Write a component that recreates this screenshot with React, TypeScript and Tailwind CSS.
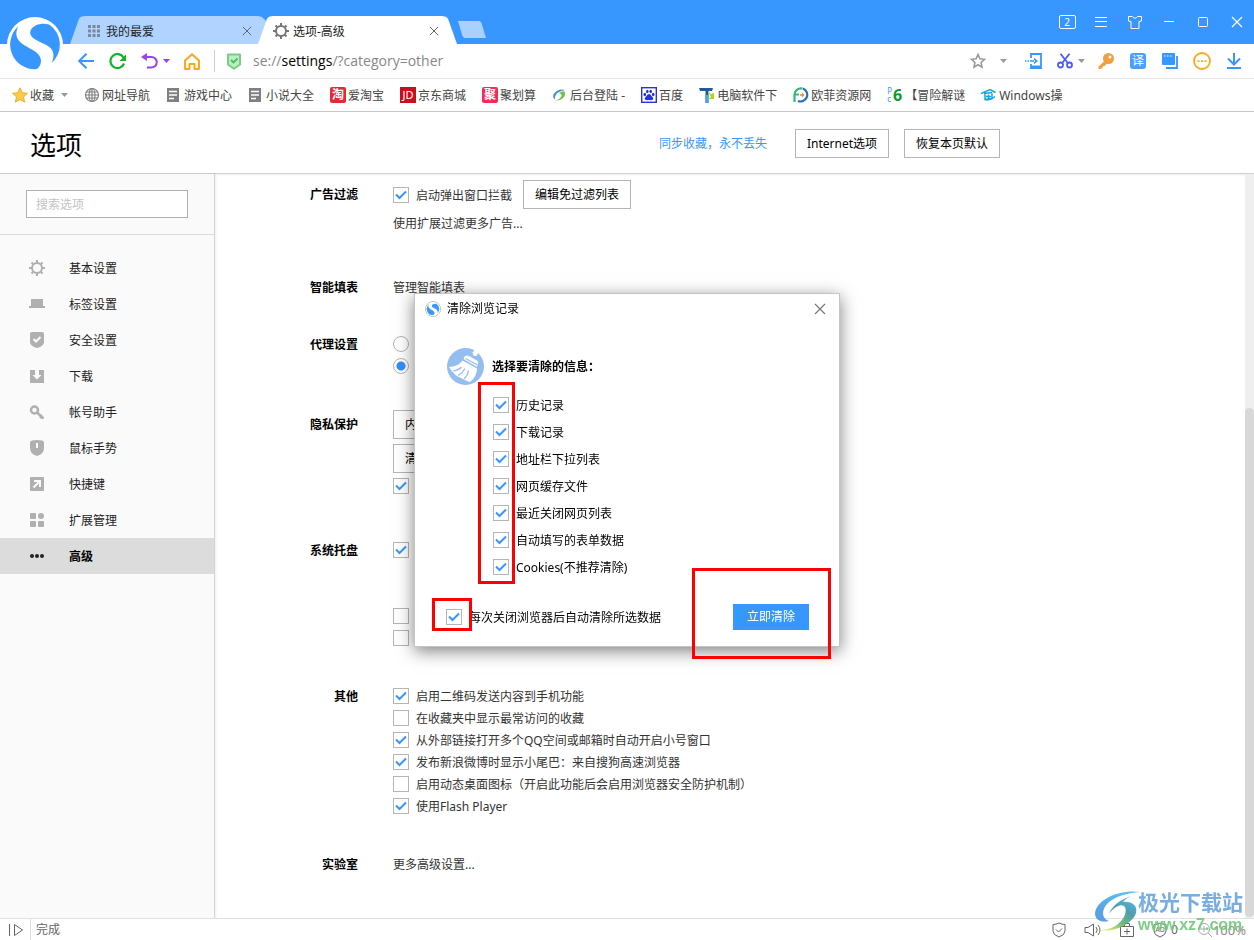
import * as React from "react"

const navItems = [
  { id: "basic", label: "基本设置" },
  { id: "tabs", label: "标签设置" },
  { id: "safe", label: "安全设置" },
  { id: "download", label: "下载" },
  { id: "account", label: "帐号助手" },
  { id: "mouse", label: "鼠标手势" },
  { id: "shortcut", label: "快捷键" },
  { id: "extension", label: "扩展管理" },
  { id: "advanced", label: "高级" },
]

const otherOptions = [
  { label: "启用二维码发送内容到手机功能", checked: true },
  { label: "在收藏夹中显示最常访问的收藏", checked: false },
  { label: "从外部链接打开多个QQ空间或邮箱时自动开启小号窗口", checked: true },
  { label: "发布新浪微博时显示小尾巴：来自搜狗高速浏览器", checked: true },
  { label: "启用动态桌面图标（开启此功能后会启用浏览器安全防护机制）", checked: false },
  { label: "使用Flash Player", checked: true },
]

const clearOptions = [
  "历史记录",
  "下载记录",
  "地址栏下拉列表",
  "网页缓存文件",
  "最近关闭网页列表",
  "自动填写的表单数据",
  "Cookies(不推荐清除)",
]

function Logo({ className, color = "#3897ff" }: { className?: string; color?: string }) {
  return (
    <svg viewBox="0 0 168 168" className={className} aria-hidden="true">
      <circle cx="84" cy="84" r="84" fill="#fff" />
      <path d="M34 28A74 74 0 0 0 84 157Q92 157 96 150C108 132 102 112 76 98C48 82 14 68 34 28Z" fill={color} />
      <path d="M128 23A74 74 0 0 1 134 138C146 108 138 92 110 80C84 68 62 58 72 38C80 22 108 16 128 23Z" fill={color} />
    </svg>
  )
}

function Caret({ color = "#999" }: { color?: string }) {
  return (
    <svg viewBox="0 0 7 4" className="h-1 w-[7px] shrink-0" aria-hidden="true">
      <path d="M0 0h7L3.500 4z" fill={color} />
    </svg>
  )
}

function CloseIcon({ className, stroke = "#666" }: { className?: string; stroke?: string }) {
  return (
    <svg viewBox="0 0 12 12" className={className} fill="none" stroke={stroke} strokeWidth="1.200" aria-hidden="true">
      <path d="M1 1l10 10M11 1L1 11" />
    </svg>
  )
}

function Checkbox({ label, hidden, checked = true }: { label: string; hidden?: boolean; checked?: boolean }) {
  return (
    <label className="flex h-[22px] items-center gap-[7px]">
      <span className="grid size-4 shrink-0">
        <input
          type="checkbox"
          defaultChecked={checked}
          aria-label={hidden ? label : undefined}
          className="peer size-4 appearance-none border border-[#b5b5b5] bg-white [grid-area:1/1]"
        />
        <svg
          viewBox="0 0 16 16"
          className="pointer-events-none invisible size-4 [grid-area:1/1] peer-checked:visible"
          fill="none"
          stroke="#3897ff"
          strokeWidth="2"
          aria-hidden="true"
        >
          <path d="M3 7.500l3.500 3.500L13 4.500" />
        </svg>
      </span>
      {!hidden && <span className="pt-[2px]">{label}</span>}
    </label>
  )
}

function Radio({ label, checked }: { label: string; checked?: boolean }) {
  return (
    <div className="flex h-[22px] items-center">
      <input
        type="radio"
        name="proxy"
        defaultChecked={checked}
        aria-label={label}
        className="size-4 appearance-none rounded-full border border-[#b5b5b5] bg-white checked:bg-[radial-gradient(circle,#2f8fff_4px,#fff_5px)]"
      />
    </div>
  )
}

function OutlineButton({ children }: { children: React.ReactNode }) {
  return (
    <button type="button" className="h-[29px] border border-[#b5b5b5] bg-white px-[11px] text-black">
      {children}
    </button>
  )
}

function Section({ title, className, children }: { title: string; className?: string; children: React.ReactNode }) {
  return (
    <section className={`flex gap-[35px] ${className ?? ""}`}>
      <h2 className="w-[143px] shrink-0 pt-px text-right font-bold leading-[22px] text-black">{title}</h2>
      <div>{children}</div>
    </section>
  )
}

function NavIcon({ id }: { id: string }) {
  const icons: Record<string, React.ReactNode> = {
    basic: (
      <g fill="none" stroke="#b0b0b0" strokeWidth="2">
        <circle cx="8" cy="8" r="5" />
        <path d="M8 0v3M8 13v3M0 8h3M13 8h3M2.500 2.500l2 2M11.500 11.500l2 2M13.500 2.500l-2 2M4.500 11.500l-2 2" />
      </g>
    ),
    tabs: <path d="M2 3h12v7h2v2H0v-2h2z" fill="#b0b0b0" />,
    safe: (
      <>
        <path d="M1 2Q1 0 3 0h10q2 0 2 2v8q0 4-7 6-7-2-7-6z" fill="#b0b0b0" />
        <path d="M4.500 7l2.500 2.500L11.500 5" fill="none" stroke="#fafafa" strokeWidth="2" />
      </>
    ),
    download: <path d="M1 2h5v5H3.500L8 11.500 12.500 7H10V2h5v13H1z" fill="#b0b0b0" />,
    account: (
      <g fill="none" stroke="#b0b0b0" strokeWidth="2.500">
        <circle cx="5.500" cy="6" r="3.500" />
        <path d="M8 8.500l6.500 6M11 14l2.500-2.500" />
      </g>
    ),
    mouse: (
      <>
        <path d="M1 2.500Q1 1 3 .5q5-1 10 0 2 .5 2 2V8q0 6-7 8-7-2-7-8z" fill="#b0b0b0" />
        <path d="M8 3v5" stroke="#fafafa" strokeWidth="2" />
      </>
    ),
    shortcut: (
      <>
        <rect x="1" y="1" width="14" height="14" rx="1" fill="#b0b0b0" />
        <path d="M5 5h6v6M11 5l-6.500 6.500" fill="none" stroke="#fafafa" strokeWidth="2" />
      </>
    ),
    extension: (
      <g fill="#b0b0b0">
        <rect x="1" y="1" width="6" height="6" rx="1" />
        <circle cx="12" cy="4" r="3" />
        <rect x="1" y="9" width="6" height="6" rx="1" />
        <rect x="9" y="9" width="6" height="6" rx="1" />
      </g>
    ),
    advanced: (
      <g fill="#222">
        <circle cx="3" cy="8" r="2" />
        <circle cx="8" cy="8" r="2" />
        <circle cx="13" cy="8" r="2" />
      </g>
    ),
  }
  return (
    <svg viewBox="0 0 16 16" className="size-4 shrink-0" aria-hidden="true">
      {icons[id]}
    </svg>
  )
}

function TabBar() {
  return (
    <div className="flex h-11 items-end bg-[#3897ff] pl-[70px]">
      <div className="flex h-7 w-[196px] shrink-0 items-center bg-[#b0d3ff] pl-[18px] pr-[14px] [clip-path:polygon(0_100%,9px_10%,11px_3%,15px_0,188px_0,192px_4%,196px_18%,196px_100%)]">
        <svg viewBox="0 0 12 12" className="mt-[2px] size-3" fill="#7d8795" aria-hidden="true">
          {[0, 4.5, 9].map((x) => [0, 4.5, 9].map((y) => <rect key={`${x}-${y}`} x={x} y={y} width="3" height="3" />))}
        </svg>
        <span className="ml-[6px] mt-1 flex-1 text-[#222]">我的最爱</span>
        <button type="button" aria-label="关闭标签">
          <CloseIcon className="mt-[2px] size-[10px]" />
        </button>
      </div>
      <div className="-ml-[8px] flex h-7 w-[199px] shrink-0 items-center bg-white pl-[15px] pr-[18px] [clip-path:polygon(0_100%,9px_10%,11px_3%,15px_0,184px_0,188px_3%,190px_10%,199px_100%)]">
        <svg viewBox="0 0 16 16" className="mt-[2px] size-4" fill="none" stroke="#777" strokeWidth="2" aria-hidden="true">
          <circle cx="8" cy="8" r="5" />
          <path d="M8 0v3M8 13v3M0 8h3M13 8h3M2.500 2.500l2 2M11.500 11.500l2 2M13.500 2.500l-2 2M4.500 11.500l-2 2" />
        </svg>
        <span className="ml-[4px] mt-1 flex-1 text-[#222]">选项-高级</span>
        <button type="button" aria-label="关闭标签">
          <CloseIcon className="mt-[2px] size-[10px]" />
        </button>
      </div>
      <button
        type="button"
        aria-label="新建标签"
        className="mb-[6px] ml-px h-[17px] w-7 bg-[#a9d1ff] [clip-path:polygon(0_0,78%_0,84%_12%,100%_100%,22%_100%,16%_88%)]"
      />
      <div className="ml-auto flex self-start pt-[10px]">
        <button type="button" className="flex h-6 w-[34px] items-center justify-center">
          <span className="h-[14px] w-[17px] rounded-[2px] border border-white text-center text-[10px] leading-[12px] text-white">2</span>
        </button>
        <button type="button" aria-label="菜单" className="flex h-6 w-[34px] items-center justify-center">
          <svg viewBox="0 0 12 10" className="h-[10px] w-3" stroke="#fff" aria-hidden="true">
            <path d="M0 .5h12M0 4.500h12M0 9.500h12" />
          </svg>
        </button>
        <button type="button" aria-label="皮肤" className="flex h-6 w-[34px] items-center justify-center">
          <svg viewBox="0 0 14 13" className="h-[13px] w-[14px]" fill="none" stroke="#fff" aria-hidden="true">
            <path d="M4.500.5Q7 4 9.500.5h4v4.500l-2.500.5v7H3v-7L.5 5V.5z" />
          </svg>
        </button>
        <button type="button" aria-label="最小化" className="flex h-6 w-[34px] items-center justify-center">
          <svg viewBox="0 0 10 10" className="size-[10px]" stroke="#fff" aria-hidden="true">
            <path d="M0 4.500h10" />
          </svg>
        </button>
        <button type="button" aria-label="最大化" className="flex h-6 w-[34px] items-center justify-center">
          <svg viewBox="0 0 10 10" className="size-[10px]" fill="none" stroke="#fff" aria-hidden="true">
            <rect x=".5" y=".5" width="9" height="9" rx="1" />
          </svg>
        </button>
        <button type="button" aria-label="关闭" className="flex h-6 w-[34px] items-center justify-center">
          <CloseIcon className="size-3" stroke="#fff" />
        </button>
      </div>
    </div>
  )
}

function Toolbar() {
  return (
    <div className="flex h-[35px] items-center border-b border-[#e5e5e5] bg-white pl-[70px] pr-1">
      <button type="button" aria-label="后退" className="flex w-8 justify-center">
        <svg viewBox="0 0 16 16" className="size-4" fill="none" stroke="#3897ff" strokeWidth="2" aria-hidden="true">
          <path d="M16 8H1M8.500.7L1.200 8l7.300 7.300" />
        </svg>
      </button>
      <button type="button" aria-label="刷新" className="flex w-8 justify-center">
        <svg viewBox="0 0 18 16" className="h-4 w-[18px]" aria-hidden="true">
          <path d="M14.500 4.500A7 7 0 1 0 15 10.500" fill="none" stroke="#12b52a" strokeWidth="2.200" />
          <path d="M17 1.500V8h-6.500z" fill="#12b52a" />
        </svg>
      </button>
      <div className="flex w-[42px] items-center pl-[7px]">
        <button type="button" aria-label="撤销">
          <svg viewBox="0 0 17 16" className="h-4 w-[17px]" aria-hidden="true">
            <path d="M3 4h7.500a5 5 0 0 1 0 10.500H6" fill="none" stroke="#9b3ff2" strokeWidth="2" />
            <path d="M0 4L6 0v8z" fill="#9b3ff2" />
          </svg>
        </button>
        <span className="ml-[5px] flex">
          <Caret color="#9b3ff2" />
        </span>
      </div>
      <button type="button" aria-label="主页" className="flex w-8 justify-center">
        <svg viewBox="0 0 16 17" className="h-[17px] w-4" fill="none" stroke="#ffa81f" strokeWidth="2" aria-hidden="true">
          <path d="M1 7.500L8 1.300l7 6.200V16h-4.500v-5h-5v5H1z" strokeLinejoin="round" />
        </svg>
      </button>
      <span className="ml-[6px] h-[22px] w-px bg-[#d0d0d0]" />
      <svg viewBox="0 0 16 17" className="ml-[11px] h-[17px] w-4" fill="none" aria-hidden="true">
        <path d="M2 1.500h12v10L8 15.800 2 11.500z" fill="#b5f2bd" stroke="#7ccb87" strokeWidth="2" strokeLinejoin="round" />
        <path d="M5 7l2.500 2.500L11.500 5.500" stroke="#55b564" strokeWidth="1.800" />
      </svg>
      <div
        role="textbox"
        aria-label="地址栏"
        contentEditable
        suppressContentEditableWarning
        className="ml-[11px] flex-1 font-['Open_Sans','Noto_Sans_CJK_SC',sans-serif] text-[14px] leading-5 text-[#888] outline-none"
      >
        se://<span className="text-black">settings</span>/?category=other
      </div>
      <button type="button" aria-label="收藏" className="flex w-[30px] justify-center">
        <svg viewBox="0 0 16 16" className="size-4" fill="none" stroke="#999" strokeWidth="1.600" aria-hidden="true">
          <path d="M8 1.500l1.900 4.300 4.600.5-3.400 3.200.9 4.700L8 11.800l-4 2.400.9-4.700L1.500 6.300l4.600-.5z" />
        </svg>
      </button>
      <span className="mr-1 flex w-5 justify-center">
        <Caret />
      </span>
      <button type="button" aria-label="登录" className="flex w-8 justify-center">
        <svg viewBox="0 0 17 16" className="h-4 w-[17px]" aria-hidden="true">
          <path d="M6 5V1h10v14H6v-4" fill="none" stroke="#3897ff" strokeWidth="1.800" />
          <path d="M6 12.500h10V16H6zM8 7.200h-3v1.600h5v-1.600zM9 4.800L13 8l-4 3.200zM0 7.200h1.500v1.600H0zM2.500 7.200H4v1.600H2.500z" fill="#3897ff" />
        </svg>
      </button>
      <div className="flex w-[41px] items-center gap-[5px] pl-2">
        <button type="button" aria-label="截图">
          <svg viewBox="0 0 16 16" className="size-4" fill="none" stroke="#4a5cf0" strokeWidth="1.800" aria-hidden="true">
            <circle cx="3.500" cy="12" r="2.500" />
            <circle cx="12.500" cy="12" r="2.500" />
            <path d="M3.500.8l7.500 9.400M12.500.8L5 10.200" />
          </svg>
        </button>
        <Caret />
      </div>
      <button type="button" aria-label="密码" className="flex w-8 justify-center">
        <svg viewBox="0 0 16 16" className="size-4" aria-hidden="true">
          <path d="M7 7.500L.5 13.500V16h3v-1.500H5V13h1.500l3-3z" fill="#f0a040" />
          <circle cx="10.500" cy="5.500" r="5.500" fill="#f0a040" />
          <circle cx="12" cy="4" r="1.500" fill="#fff" />
        </svg>
      </button>
      <button type="button" className="flex w-8 justify-center">
        <span className="size-4 rounded-[3px] bg-[#4aa0ff] text-center text-[12px] leading-4 text-white">译</span>
      </button>
      <button type="button" aria-label="多窗口" className="flex w-8 justify-center">
        <svg viewBox="0 0 16 16" className="size-4" aria-hidden="true">
          <path d="M1 0h11q1 0 1 1v10q0 1-1 1H1q-1 0-1-1V1q0-1 1-1z" fill="#3897ff" />
          <path d="M15 3v12H4" fill="none" stroke="#3897ff" strokeWidth="1.800" />
          <path d="M2 3h1.500M5 3h1.500M8 3h1.500" stroke="#fff" strokeWidth="1.200" />
        </svg>
      </button>
      <button type="button" aria-label="更多" className="flex w-8 justify-center">
        <svg viewBox="0 0 18 18" className="size-[18px]" aria-hidden="true">
          <circle cx="9" cy="9" r="8" fill="none" stroke="#ffa81f" strokeWidth="1.800" />
          <path d="M4.500 8.200h2v1.800h-2zM8 8.200h2v1.800H8zM11.500 8.200h2v1.800h-2z" fill="#ffa81f" />
        </svg>
      </button>
      <button type="button" aria-label="下载" className="flex w-8 justify-center">
        <svg viewBox="0 0 14 16" className="h-4 w-[14px]" fill="none" stroke="#3897ff" strokeWidth="2" aria-hidden="true">
          <path d="M7 0v11M1 5.500l6 6 6-6M0 15h14" />
        </svg>
      </button>
    </div>
  )
}

function Bookmark({ icon, children }: { icon: React.ReactNode; children: React.ReactNode }) {
  return (
    <a href="#" className="flex shrink-0 items-center gap-[2px]">
      {icon}
      <span className="pt-[2px]">{children}</span>
    </a>
  )
}

function DocIcon() {
  return (
    <svg viewBox="0 0 16 16" className="size-4" aria-hidden="true">
      <path d="M1 1h12v14H1z" fill="#808080" />
      <path d="M3 4.500h8M3 8h8M3 11.500h5" stroke="#fff" strokeWidth="1.500" />
    </svg>
  )
}

function BookmarkBar() {
  return (
    <nav aria-label="收藏栏" className="flex h-[33px] items-center gap-4 overflow-hidden border-b border-[#c8c8c8] bg-white pl-3 text-[#444]">
      <button type="button" className="flex shrink-0 items-center gap-[2px]">
        <svg viewBox="0 0 16 16" className="size-4" aria-hidden="true">
          <path d="M8 .8l2.200 4.900 5.200.6-3.900 3.600 1.100 5.300L8 12.600l-4.600 2.600 1.100-5.300L.6 6.300l5.200-.6z" fill="#fccb45" stroke="#e9ae35" />
        </svg>
        <span className="pt-[2px]">收藏</span>
        <span className="ml-[5px] flex">
          <Caret />
        </span>
      </button>
      <Bookmark
        icon={
          <svg viewBox="0 0 16 16" className="size-4" fill="none" stroke="#808080" strokeWidth="1.200" aria-hidden="true">
            <circle cx="8" cy="8" r="6.500" />
            <ellipse cx="8" cy="8" rx="3" ry="6.500" />
            <path d="M8 1.500v13M1.500 8h13M2.500 5h11M2.500 11h11" />
          </svg>
        }
      >
        网址导航
      </Bookmark>
      <Bookmark icon={<DocIcon />}>游戏中心</Bookmark>
      <Bookmark icon={<DocIcon />}>小说大全</Bookmark>
      <Bookmark icon={<span className="size-4 rounded-[2px] bg-[#e02c34] text-center text-[12px] font-bold leading-4 text-white">淘</span>}>
        爱淘宝
      </Bookmark>
      <Bookmark icon={<span className="size-4 bg-[#c8101e] text-center text-[11px] leading-4 text-white">JD</span>}>
        京东商城
      </Bookmark>
      <Bookmark icon={<span className="size-4 rounded-[2px] bg-[#f5295a] text-center text-[12px] font-bold leading-4 text-white">聚</span>}>
        聚划算
      </Bookmark>
      <Bookmark
        icon={
          <svg viewBox="0 0 16 16" className="size-4" aria-hidden="true">
            <path d="M13 3Q7 1 2.500 6-.5 10 3 12.500 2.500 8 6 5.500 9 3.500 13 3z" fill="#3f8fd6" />
            <path d="M7 6q4-2.500 5.500-1.500Q14 8 11 11q-3 3-7.500 2.500Q8 12.500 9.500 9q.5-2-2.500-3z" fill="#6fc04a" />
          </svg>
        }
      >
        后台登陆 -
      </Bookmark>
      <Bookmark
        icon={
          <svg viewBox="0 0 16 16" className="size-4" aria-hidden="true">
            <rect x=".7" y=".7" width="14.600" height="14.600" fill="#fff" stroke="#2932e1" strokeWidth="1.400" />
            <g fill="#2932e1">
              <ellipse cx="3.800" cy="7.500" rx="1.300" ry="1.700" />
              <ellipse cx="6.300" cy="4.500" rx="1.300" ry="1.700" />
              <ellipse cx="9.700" cy="4.500" rx="1.300" ry="1.700" />
              <ellipse cx="12.200" cy="7.500" rx="1.300" ry="1.700" />
              <path d="M8 7q1.500 0 2.500 2 2.500 2 1.500 3.500-1 1-4 .5-3 .5-4-.5Q3 11 5.500 9 6.500 7 8 7z" />
            </g>
          </svg>
        }
      >
        百度
      </Bookmark>
      <Bookmark
        icon={
          <svg viewBox="0 0 16 16" className="size-4" aria-hidden="true">
            <path d="M0 1h14l-1 3H9.500v12h-3V4H1z" fill="#235a9c" />
            <path d="M6.500 8h3v8h-3z" fill="#49a8e0" />
            <path d="M9 4l3 3 3-1v6H9l3-2z" fill="#a6d81e" />
          </svg>
        }
      >
        电脑软件下
      </Bookmark>
      <Bookmark
        icon={
          <svg viewBox="0 0 16 16" className="size-4" fill="none" aria-hidden="true">
            <path d="M1.500 15V7.500a6.500 6.500 0 0 1 8-6M1.500 7.500H6" stroke="#35b978" strokeWidth="2.200" />
            <path d="M10 1.500a6.600 6.600 0 1 1-5 12.500" stroke="#2a6fb8" strokeWidth="2.200" />
            <path d="M7 7.200h2V5.500L11.500 8 9 10.500V8.800H7z" fill="#f5853a" />
          </svg>
        }
      >
        欧菲资源网
      </Bookmark>
      <Bookmark
        icon={
          <span className="flex size-4 items-center">
            <span className="flex flex-col text-[8px] leading-[8px] text-[#3f9bea]">
              <span>P</span>
              <span>c</span>
            </span>
            <span className="ml-px text-[16px] font-bold leading-4 text-[#11992e]">6</span>
          </span>
        }
      >
        【冒险解谜
      </Bookmark>
      <Bookmark
        icon={
          <svg viewBox="0 0 16 16" className="size-4" fill="none" stroke="#14a5e0" strokeWidth="1.500" aria-hidden="true">
            <path d="M0 6.500l9-4 5.500 3M3 6.500l8-1M4 7v5.500l7-1V6.500M5 9.500h5M7.500 7.500v4" />
            <path d="M4.500 13Q10 13 14 9.500" />
          </svg>
        }
      >
        Windows操
      </Bookmark>
    </nav>
  )
}

function Sidebar() {
  return (
    <aside className="w-[215px] shrink-0 border-r border-[#d5d5d5] bg-[#fafafa] shadow-[1px_0_2px_#00000012]">
      <div className="border-b border-[#dcdcdc] px-[26px] py-4">
        <input
          type="search"
          aria-label="搜索选项"
          placeholder="搜索选项"
          className="h-7 w-full appearance-none border border-[#b0b0b0] bg-white px-[9px] outline-none placeholder:text-[#c4c4c4]"
        />
      </div>
      <nav aria-label="选项分类" className="mt-[15px]">
        {navItems.map((item) => (
          <a
            key={item.id}
            href="#"
            className={
              item.id === "advanced"
                ? "flex h-9 items-center gap-6 bg-[#dcdcdc] pl-[29px] font-bold text-black"
                : "flex h-9 items-center gap-6 pl-[29px] text-[#222]"
            }
          >
            <NavIcon id={item.id} />
            <span className="pt-px">{item.label}</span>
          </a>
        ))}
      </nav>
    </aside>
  )
}

function Settings() {
  return (
    <main className="min-w-0 flex-1 pt-[6px]">
      <Section title="广告过滤" className="[&>h2]:pt-1">
        <div className="flex h-[29px] items-center gap-[11px]">
          <Checkbox label="启动弹出窗口拦截" />
          <OutlineButton>编辑免过滤列表</OutlineButton>
        </div>
        <a href="#" className="mt-1 block leading-[22px]">使用扩展过滤更多广告...</a>
      </Section>
      <Section title="智能填表" className="mt-[41px]">
        <a href="#" className="block pt-px leading-[22px]">管理智能填表</a>
      </Section>
      <Section title="代理设置" className="mt-[34px]">
        <Radio label="不使用代理" />
        <Radio label="使用IE代理设置" checked />
      </Section>
      <Section title="隐私保护" className="mt-[33px] [&>h2]:pt-1">
        <div className="flex flex-col items-start gap-[5px]">
          <OutlineButton>内容设置</OutlineButton>
          <OutlineButton>清除浏览记录</OutlineButton>
        </div>
        <div className="mt-[2px]">
          <Checkbox label="隐私保护" hidden />
        </div>
      </Section>
      <Section title="系统托盘" className="mt-[42px]">
        <Checkbox label="系统托盘" hidden />
        <div className="mt-[44px]">
          <Checkbox label="托盘提示" hidden checked={false} />
          <Checkbox label="托盘图标" hidden checked={false} />
        </div>
      </Section>
      <Section title="其他" className="mt-[36px]">
        {otherOptions.map((o) => (
          <Checkbox key={o.label} label={o.label} checked={o.checked} />
        ))}
      </Section>
      <Section title="实验室" className="mt-[36px]">
        <a href="#" className="block pt-px leading-[22px]">更多高级设置...</a>
      </Section>
    </main>
  )
}

function ClearDialog() {
  return (
    <div className="pointer-events-none fixed inset-0 flex items-center justify-center">
      <div
        role="dialog"
        aria-labelledby="clear-title"
        className="pointer-events-auto relative w-[426px] border border-[#c4c4c4] bg-white pb-4 text-black shadow-[0_4px_16px_#00000080]"
      >
        <div className="flex h-[30px] items-center pl-[10px] pr-[13px]">
          <span className="flex size-4 items-center justify-center rounded-full border border-[#bbb] bg-white">
            <Logo className="size-[14px]" />
          </span>
          <h2 id="clear-title" className="ml-[6px] flex-1">清除浏览记录</h2>
          <button type="button" aria-label="关闭">
            <CloseIcon className="size-3" stroke="#777" />
          </button>
        </div>
        <div className="mt-6 flex items-center gap-2 pl-8">
          <svg viewBox="0 0 37 37" className="size-[37px]" aria-hidden="true">
            <circle cx="18.500" cy="18.500" r="18.500" fill="#94bdf0" />
            <path d="M25.500 4.500l3-3.500 3 2-1 3.500q-1 2-3 1.500-2-1-2-3.500z" fill="#fff" />
            <path d="M18 8q2-1 4 0l8 4.500q2 1 1 3l-1 3.500L16.500 11z" fill="#fff" />
            <path d="M15.500 12.500L30 20.500q0 8-7 13.500-4-1-7-3Q7 28 2 19q9 0 13.500-6.500z" fill="#fff" />
            <path d="M18.500 10.500l12 6.500M6 23q6-1 8.500-4M11 27.500q5-3 7-7M17 31q4-4 4.500-8.500" stroke="#94bdf0" strokeWidth="1.200" fill="none" />
          </svg>
          <p className="pt-px font-bold">选择要清除的信息：</p>
        </div>
        <div className="mt-[9px] flex flex-col gap-[5px] pl-[78px]">
          {clearOptions.map((label) => (
            <Checkbox key={label} label={label} />
          ))}
        </div>
        <div className="mt-[26px] flex items-center justify-between pl-[31px] pr-[30px]">
          <Checkbox label="每次关闭浏览器后自动清除所选数据" />
          <button type="button" className="h-[26px] w-[76px] bg-[#3897ff] text-white">立即清除</button>
        </div>
        <div className="pointer-events-none absolute left-[63px] top-[88px] h-[202px] w-[37px] border-3 border-[#ff0000]" />
        <div className="pointer-events-none absolute left-[17px] top-[304px] h-[33px] w-10 border-3 border-[#ff0000]" />
        <div className="pointer-events-none absolute left-[277px] top-[274px] h-[91px] w-[139px] border-3 border-[#ff0000]" />
      </div>
    </div>
  )
}

function StatusBar() {
  return (
    <footer className="flex h-[22px] items-center border-t border-[#e2e2e2] bg-white pl-2 pr-2 text-[#666]">
      <button type="button" aria-label="侧边栏">
        <svg viewBox="0 0 16 14" className="h-[14px] w-4" fill="none" stroke="#666" aria-hidden="true">
          <path d="M1.500 1v12M6.500 1.500v11L14.500 7z" />
        </svg>
      </button>
      <span className="ml-[6px] h-full w-px bg-[#ddd]" />
      <span className="ml-[5px] flex-1">完成</span>
      <div className="flex items-center">
        <svg viewBox="0 0 16 16" className="mr-[17px] size-4" fill="none" stroke="#666" aria-hidden="true">
          <path d="M8 1q3 1.500 6 1.500V9q0 4-6 6-6-2-6-6V2.500Q5 2.500 8 1zM5 7.500l2.500 2.500L11 6.500" />
        </svg>
        <svg viewBox="0 0 17 16" className="mr-[19px] h-4 w-[17px]" fill="none" stroke="#666" aria-hidden="true">
          <path d="M1 5.500h3L9.500 2v12L4 10.500H1zM12 5q2.500 3 0 6M14 3q4 5 0 10" />
        </svg>
        <svg viewBox="0 0 14 14" className="mr-[19px] size-[14px]" fill="none" stroke="#666" aria-hidden="true">
          <path d="M.5 3.500h13v10H.5zM4.500 3.500v-3h5v3M4 8.500h6M7 5.500v6" />
        </svg>
        <span className="flex items-center gap-[4px]">
          <svg viewBox="0 0 14 16" className="h-4 w-[14px]" fill="none" stroke="#666" aria-hidden="true">
            <path d="M7 1q3 1.500 6 1.500V9q0 4-6 6-6-2-6-6V2.500Q4 2.500 7 1z" />
            <text x="7" y="10" textAnchor="middle" fontSize="7" fill="#666" stroke="none">AD</text>
          </svg>
          0
        </span>
        <span className="ml-[19px] flex items-center text-[13px] text-[#888]">
          <svg viewBox="0 0 16 16" className="size-4" fill="none" stroke="#aaa" aria-hidden="true">
            <circle cx="7" cy="7" r="5.500" />
            <path d="M11 11l4 4M4 7h6M7 4v6" />
          </svg>
          100%
        </span>
      </div>
    </footer>
  )
}

function Watermark() {
  return (
    <div className="pointer-events-none absolute bottom-[7px] right-[11px] flex items-center opacity-90">
      <svg viewBox="0 0 46 42" className="h-[42px] w-[46px]" aria-hidden="true">
        <defs>
          <linearGradient id="wm-blue" x1="0" y1="1" x2="1" y2="0">
            <stop offset="0" stopColor="#4a8fdc" />
            <stop offset="1" stopColor="#45c3f0" />
          </linearGradient>
          <linearGradient id="wm-green" x1=".8" y1="0" x2=".2" y2="1">
            <stop offset="0" stopColor="#45b8ec" />
            <stop offset=".4" stopColor="#3b93a8" />
            <stop offset=".7" stopColor="#5fb56a" />
            <stop offset="1" stopColor="#dce86a" />
          </linearGradient>
        </defs>
        <path d="M45 1C25-2 2 8 0 22C0 29 6 32 14 30C7 28 6 20 12 13C20 5 32 2 45 1Z" fill="url(#wm-blue)" />
        <path d="M44 3C30 6 18 12 14 23C20 15 26 13 29 15C33 18 30 28 22 34C18 37 10 39 5 39C20 42 38 32 41 22C43 14 36 10 28 11C32 6 38 4 44 3Z" fill="url(#wm-green)" />
      </svg>
      <div className="-ml-[3px] flex flex-col gap-[3px] whitespace-nowrap font-bold">
        <span className="text-[21px] leading-6 text-[#69a5de]">极光下载站</span>
        <span className="font-['Liberation_Sans',sans-serif] text-[16px] leading-4 text-[#6dcb78]">www.xz7.com</span>
      </div>
    </div>
  )
}

export default function App() {
  return (
    <div className="relative flex min-h-screen flex-col bg-white font-['Noto_Sans','Noto_Sans_CJK_SC',sans-serif] text-[12px] leading-4 text-[#333]">
      <TabBar />
      <Toolbar />
      <BookmarkBar />
      <button type="button" aria-label="搜狗浏览器" className="absolute left-[7px] top-[17px]">
        <Logo className="size-14" />
      </button>

      <header className="border-b border-[#d0d0d0] bg-white shadow-[0_1px_2px_#00000012]">
        <div className="flex h-[61px] max-w-[1000px] items-center pl-[30px] pt-[2px]">
          <h1 className="flex-1 pt-[2px] text-[26px] leading-8 text-black">选项</h1>
          <a href="#" className="mr-7 text-[#3897ff]">同步收藏，永不丢失</a>
          <div className="flex gap-[15px]">
            <OutlineButton>Internet选项</OutlineButton>
            <OutlineButton>恢复本页默认</OutlineButton>
          </div>
        </div>
      </header>

      <div className="flex flex-1">
        <Sidebar />
        <Settings />
        <div className="flex w-[9px] shrink-0 flex-col bg-[#efefef] pb-px pt-[234px]">
          <div className="flex-1 rounded-full bg-[#d8d8d8]" />
        </div>
      </div>

      <StatusBar />
      <ClearDialog />
      <Watermark />
    </div>
  )
}
